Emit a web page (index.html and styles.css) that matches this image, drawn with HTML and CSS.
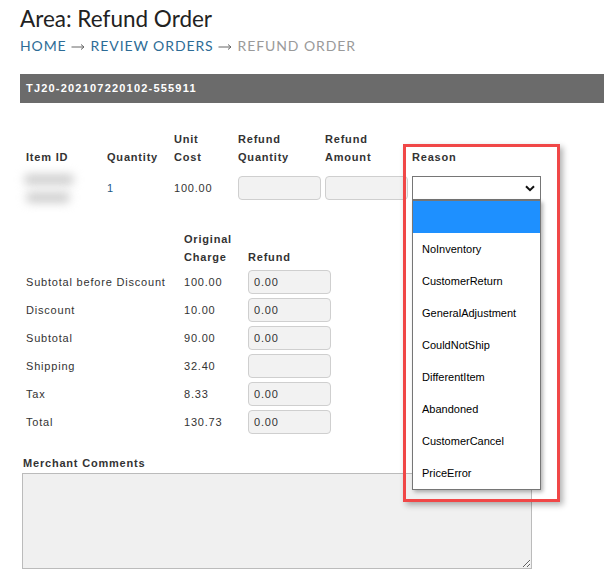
FILE: index.html
```html
<!DOCTYPE html>
<html lang="en">
<head>
    <meta charset="UTF-8">
    <meta name="viewport" content="width=device-width, initial-scale=1.0">
    <title>Area: Refund Order</title>
    <link rel="stylesheet" href="styles.css">
</head>
<body>
    <div class="page">
        <h1 class="title">Area: Refund Order</h1>
        <div class="crumbs">
            <a href="#">Home</a>
            <svg class="arrow" width="14" height="8" viewBox="0 0 14 8"><path d="M0.5 4 H13 M10 1.5 L13 4 L10 6.5" fill="none" stroke="#666" stroke-width="1"/></svg>
            <a href="#">Review Orders</a>
            <svg class="arrow" width="14" height="8" viewBox="0 0 14 8"><path d="M0.5 4 H13 M10 1.5 L13 4 L10 6.5" fill="none" stroke="#666" stroke-width="1"/></svg>
            <span class="current">Refund Order</span>
        </div>

        <div class="order-bar">TJ20-202107220102-555911</div>

        <div class="content">
            <div class="items">
                <div class="items-head">
                    <div>Item ID</div>
                    <div>Quantity</div>
                    <div>Unit<br>Cost</div>
                    <div>Refund<br>Quantity</div>
                    <div>Refund<br>Amount</div>
                    <div>Reason</div>
                </div>
                <div class="items-row">
                    <div class="item-id">
                        <span class="blur blur-a"></span>
                        <span class="blur blur-b"></span>
                    </div>
                    <div class="qty">1</div>
                    <div>100.00</div>
                    <div><input class="field" type="text"></div>
                    <div><input class="field" type="text"></div>
                    <div>
                        <div class="select">
                            <svg width="10" height="7" viewBox="0 0 10 7"><path d="M1 1.2 L5 5.2 L9 1.2" fill="none" stroke="#111" stroke-width="2"/></svg>
                        </div>
                    </div>
                </div>
            </div>

            <div class="summary">
                <div class="summary-head">
                    <div></div>
                    <div>Original<br>Charge</div>
                    <div>Refund</div>
                </div>
                <div class="summary-row"><div>Subtotal before Discount</div><div>100.00</div><div><input class="field" type="text" value="0.00"></div></div>
                <div class="summary-row"><div>Discount</div><div>10.00</div><div><input class="field" type="text" value="0.00"></div></div>
                <div class="summary-row"><div>Subtotal</div><div>90.00</div><div><input class="field" type="text" value="0.00"></div></div>
                <div class="summary-row"><div>Shipping</div><div>32.40</div><div><input class="field" type="text" value=""></div></div>
                <div class="summary-row"><div>Tax</div><div>8.33</div><div><input class="field" type="text" value="0.00"></div></div>
                <div class="summary-row"><div>Total</div><div>130.73</div><div><input class="field" type="text" value="0.00"></div></div>
            </div>

            <div class="comments">
                <label for="comments">Merchant Comments</label>
                <textarea id="comments"></textarea>
            </div>
        </div>

        <!-- open reason dropdown -->
        <ul class="options">
            <li class="picked"></li>
            <li>NoInventory</li>
            <li>CustomerReturn</li>
            <li>GeneralAdjustment</li>
            <li>CouldNotShip</li>
            <li>DifferentItem</li>
            <li>Abandoned</li>
            <li>CustomerCancel</li>
            <li>PriceError</li>
        </ul>

        <!-- highlight box -->
        <div class="highlight"></div>
    </div>
</body>
</html>
```

FILE: styles.css
```css
* {
    margin: 0;
    padding: 0;
    box-sizing: border-box;
}

body {
    font-family: "Liberation Sans", Arial, sans-serif;
    background: #fff;
    color: #333;
    overflow: hidden;
}

.page {
    position: relative;
    padding: 6px 0 0 20px;
    min-height: 580px;
}

.title {
    font-family: Lato, sans-serif;
    font-weight: 400;
    font-size: 22.5px;
    line-height: 26px;
    color: #222;
}

.crumbs {
    font-family: Lato, sans-serif;
    font-size: 14px;
    letter-spacing: 0.9px;
    text-transform: uppercase;
    margin-top: 6px;
    line-height: 16px;
    color: #555;
    display: flex;
    align-items: center;
}

.crumbs a {
    color: #2d6c96;
    text-decoration: none;
}

.crumbs .arrow {
    margin: 2px 6px 0 4px;
}

.crumbs .current {
    color: #9a9a9a;
}

.order-bar {
    margin-top: 20px;
    height: 29px;
    background: #6b6b6b;
    color: #fff;
    font-size: 11px;
    font-weight: 700;
    letter-spacing: 1.2px;
    line-height: 29px;
    padding-left: 6px;
}

.content {
    padding-left: 6px;
    font-size: 11px;
    letter-spacing: 0.8px;
    color: #333;
}

.items {
    margin-top: 27px;
}

.items-head,
.items-row {
    display: grid;
    grid-template-columns: 81px 67px 64px 87px 87px 130px;
}

.items-head {
    align-items: end;
    font-weight: 700;
    line-height: 18px;
}

.items-row {
    margin-top: 10px;
    height: 24px;
    align-items: center;
}

.item-id {
    position: relative;
    height: 24px;
}

.blur {
    position: absolute;
    display: block;
    background: #cfcfcf;
    filter: blur(5px);
    border-radius: 5px;
}

.blur-a {
    left: -2px;
    top: -2px;
    width: 50px;
    height: 11px;
}

.blur-b {
    left: 0;
    top: 16px;
    width: 44px;
    height: 11px;
}

.qty {
    color: #1f5a86;
}

.field {
    display: block;
    width: 83px;
    height: 24px;
    border: 1px solid #cfcfcf;
    border-radius: 4px;
    background: #f2f2f2;
    font-family: "Liberation Sans", Arial, sans-serif;
    font-size: 11px;
    letter-spacing: 0.8px;
    color: #333;
    padding: 0 5px;
}

.select {
    width: 129px;
    height: 24px;
    border: 1px solid #767676;
    background: #fff;
    display: flex;
    align-items: center;
    justify-content: flex-end;
    padding-right: 5px;
}

.summary {
    margin-top: 30px;
}

.summary-head,
.summary-row {
    display: grid;
    grid-template-columns: 158px 64px 84px;
}

.summary-head {
    align-items: end;
    font-weight: 700;
    line-height: 18px;
}

.summary-row {
    height: 24px;
    align-items: center;
    margin-top: 4px;
}

.summary-row .field {
    width: 83px;
}

.comments {
    margin-top: 22px;
    margin-left: -4px;
}

.comments label {
    display: block;
    font-weight: 700;
    line-height: 14px;
    margin-left: 1px;
}

.comments textarea {
    display: block;
    margin-top: 3px;
    width: 510px;
    height: 96px;
    background: #f0f0f0;
    border: 1px solid #bbb;
    resize: vertical;
}

.options {
    position: absolute;
    left: 412px;
    top: 200px;
    width: 129px;
    list-style: none;
    background: #fff;
    border: 1px solid #767676;
    box-shadow: 2px 2px 4px rgba(0, 0, 0, 0.3);
    font-size: 11px;
    color: #000;
}

.options li {
    height: 32px;
    line-height: 32px;
    padding-left: 9px;
}

.options li.picked {
    background: #1e90ff;
}

.highlight {
    position: absolute;
    left: 403px;
    top: 144px;
    width: 157px;
    height: 358px;
    border: 3px solid #f04747;
    box-shadow: 3px 3px 6px rgba(0, 0, 0, 0.3);
}
```
